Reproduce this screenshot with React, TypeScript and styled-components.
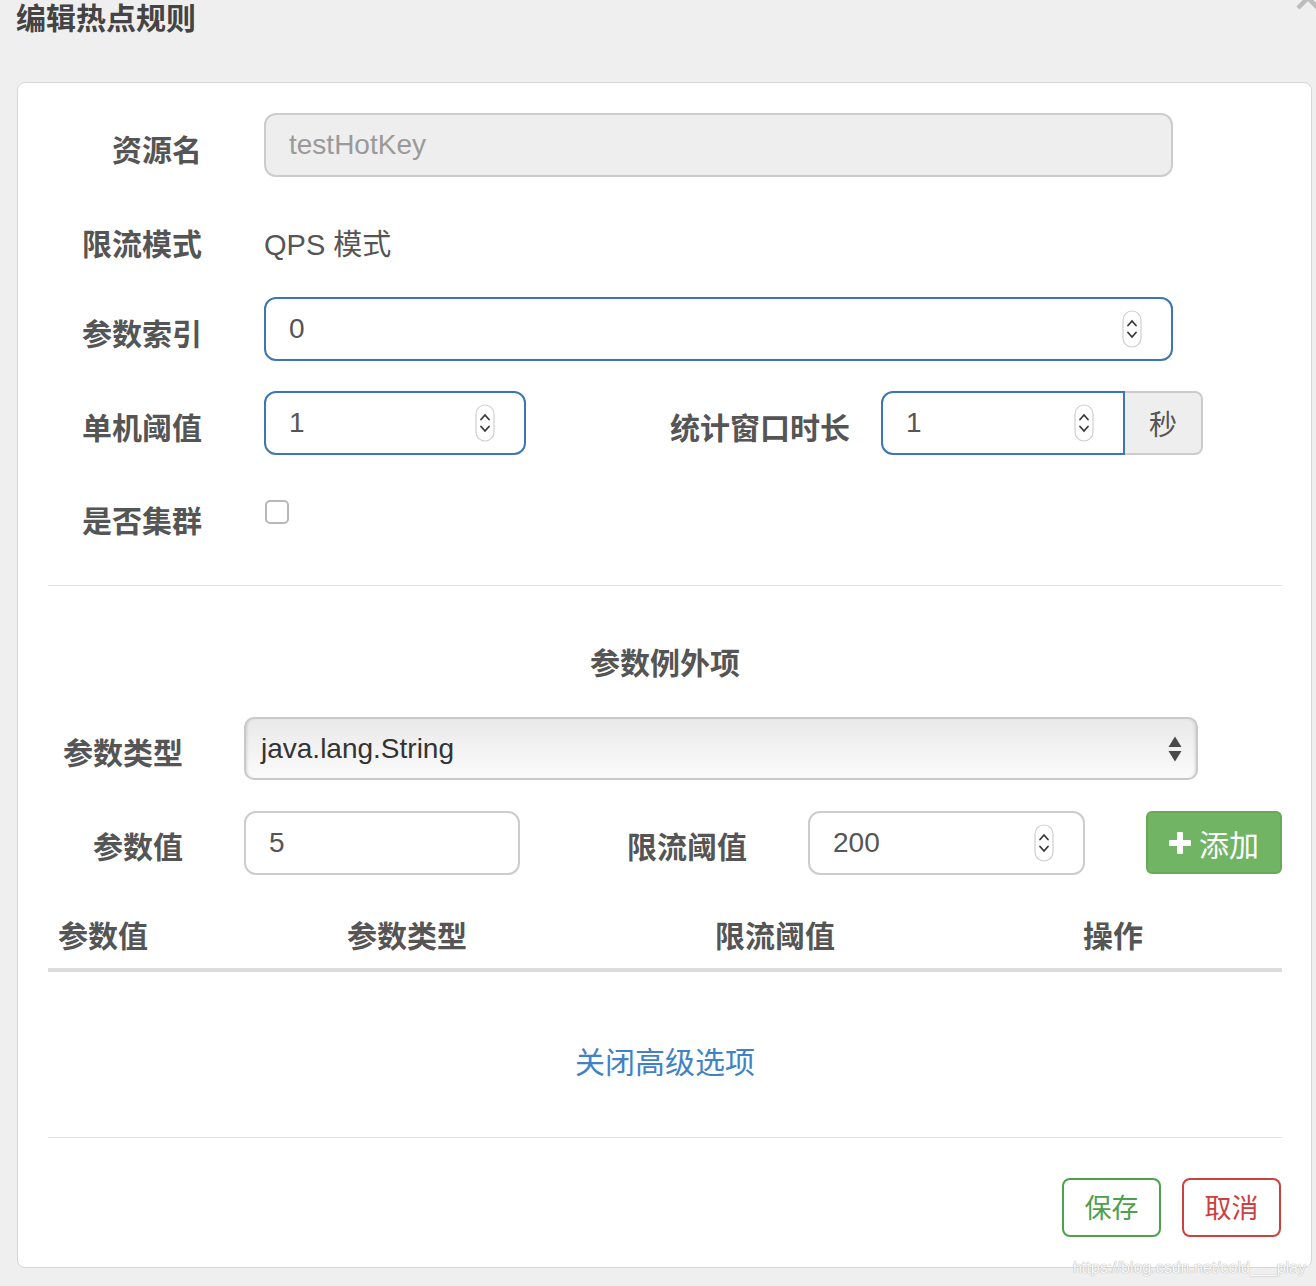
import React from "react";
import styled, { createGlobalStyle } from "styled-components";

const GlobalStyle = createGlobalStyle`
    html, body {
        margin: 0;
        padding: 0;
        background: #efefef;
    }
    body {
        font-family: "Liberation Sans", "Noto Sans CJK SC", sans-serif;
        color: #555;
    }
    * {
        box-sizing: border-box;
    }
`;

const Spinner = () => (
    <svg width="20" height="38" viewBox="0 0 20 38">
        <rect x="1" y="1" width="18" height="36" rx="9" fill="#fff" stroke="#cfcfcf" strokeWidth="1.2" />
        <path d="M6 15.5 L10 11 L14 15.5" stroke="#3a3a3a" strokeWidth="1.8" fill="none" strokeLinecap="round" />
        <path d="M6 22.5 L10 27 L14 22.5" stroke="#3a3a3a" strokeWidth="1.8" fill="none" strokeLinecap="round" />
    </svg>
);

const SelectArrows = () => (
    <svg width="14" height="28" viewBox="0 0 14 28">
        <path d="M0.5 12 L7 1.5 L13.5 12 Z" fill="#4a4a4a" />
        <path d="M0.5 16 L13.5 16 L7 26.5 Z" fill="#4a4a4a" />
    </svg>
);

const PlusIcon = () => (
    <svg width="22" height="22" viewBox="0 0 22 22">
        <path d="M11 2 V20 M2 11 H20" stroke="#fff" strokeWidth="6" strokeLinecap="round" />
    </svg>
);

const App = () => {
    return (
        <>
            <GlobalStyle />
            <Page>
                <Header>
                    <Title>编辑热点规则</Title>
                    <CloseIcon width="28" height="28" viewBox="0 0 28 28">
                        <path d="M4 4 L24 24 M24 4 L4 24" stroke="#bdbdbd" strokeWidth="4.5" />
                    </CloseIcon>
                </Header>
                <Card>
                    <Section>
                        <Row>
                            <Label $top={18}>资源名</Label>
                            <Field $width={909} $variant="disabled">
                                testHotKey
                            </Field>
                        </Row>
                        <Row>
                            <Label $top={18}>限流模式</Label>
                            <StaticText>QPS 模式</StaticText>
                        </Row>
                        <Row>
                            <Label $top={18}>参数索引</Label>
                            <Field $width={909} $variant="focus">
                                0
                                <Spinner />
                            </Field>
                        </Row>
                        <Row>
                            <Label $top={18}>单机阈值</Label>
                            <InlineFields>
                                <Field $width={262} $variant="focus">
                                    1
                                    <Spinner />
                                </Field>
                                <InlineLabel $top={18}>统计窗口时长</InlineLabel>
                                <InputGroup>
                                    <Field $width={244} $variant="focus" $group>
                                        1
                                        <Spinner />
                                    </Field>
                                    <Addon>秒</Addon>
                                </InputGroup>
                            </InlineFields>
                        </Row>
                        <Row>
                            <Label $top={17}>是否集群</Label>
                            <Checkbox />
                        </Row>
                    </Section>
                    <Divider $top={40} />
                    <SectionTitle>参数例外项</SectionTitle>
                    <ExceptionForm>
                        <TypeRow>
                            <Label $top={17}>参数类型</Label>
                            <Select>
                                java.lang.String
                                <SelectArrows />
                            </Select>
                        </TypeRow>
                        <ValueRow>
                            <Label $top={17}>参数值</Label>
                            <Field $width={276}>5</Field>
                            <Label $top={17}>限流阈值</Label>
                            <Field $width={277}>
                                200
                                <Spinner />
                            </Field>
                            <AddButton>
                                <PlusIcon />
                                添加
                            </AddButton>
                        </ValueRow>
                    </ExceptionForm>
                    <TableHead>
                        <HeadCell>参数值</HeadCell>
                        <HeadCell>参数类型</HeadCell>
                        <HeadCell>限流阈值</HeadCell>
                        <HeadCell>操作</HeadCell>
                    </TableHead>
                    <ToggleLink>关闭高级选项</ToggleLink>
                    <Divider $top={54} />
                    <Footer>
                        <OutlineButton $color="#4e9f4e">保存</OutlineButton>
                        <OutlineButton $color="#cc4040">取消</OutlineButton>
                    </Footer>
                </Card>
                <Watermark>https://blog.csdn.net/cold___play</Watermark>
            </Page>
        </>
    );
};

const Page = styled.div`
    position: relative;
    width: 1316px;
    height: 1286px;
    overflow: hidden;
    background: #efefef;
`;

const Header = styled.div`
    display: flex;
    justify-content: space-between;
    align-items: flex-start;
    height: 82px;
    padding-left: 16px;
`;

const Title = styled.h1`
    margin: 0;
    font-size: 30px;
    line-height: 37px;
    font-weight: 700;
    color: #444;
`;

const CloseIcon = styled.svg`
    margin-top: -16px;
    margin-right: -6px;
`;

const Card = styled.div`
    margin-left: 17px;
    width: 1295px;
    height: 1186px;
    background: #fff;
    border: 1px solid #d6d6d6;
    border-radius: 8px;
    padding: 30px 29px 0 30px;
`;

const Section = styled.div`
    display: flex;
    flex-direction: column;
    gap: 30px;
`;

const Row = styled.div`
    display: grid;
    grid-template-columns: 154px 1fr;
    column-gap: 62px;
    min-height: 60px;
`;

const Label = styled.label<{ $top?: number }>`
    display: block;
    text-align: right;
    font-size: 30px;
    font-weight: 700;
    line-height: 40px;
    padding-top: ${({ $top = 16 }) => $top}px;
    color: #555;
    white-space: nowrap;
`;

const StaticText = styled.div`
    font-size: 29px;
    line-height: 40px;
    padding-top: 18px;
    color: #555;
`;

const Field = styled.div<{ $width: number; $variant?: "focus" | "disabled"; $group?: boolean }>`
    display: flex;
    align-items: center;
    justify-content: space-between;
    width: ${({ $width }) => $width}px;
    height: 64px;
    padding: 0 29px 0 23px;
    font-size: 28px;
    color: ${({ $variant }) => ($variant === "disabled" ? "#9a9a9a" : "#555")};
    background: ${({ $variant }) => ($variant === "disabled" ? "#eee" : "#fff")};
    border: 2px solid
        ${({ $variant }) => ($variant === "focus" ? "#3d77b3" : "#cccccc")};
    border-radius: ${({ $group }) => ($group ? "12px 0 0 12px" : "12px")};
`;

const InlineFields = styled.div`
    display: flex;
    align-items: flex-start;
    width: 939px;
`;

const InlineLabel = styled(Label)`
    flex: 1;
    margin-right: 31px;
`;

const InputGroup = styled.div`
    display: flex;
    width: 322px;
`;

const Addon = styled.div`
    width: 78px;
    height: 64px;
    display: flex;
    align-items: center;
    justify-content: center;
    font-size: 28px;
    color: #555;
    background: #eee;
    border: 2px solid #ccc;
    border-left: none;
    border-radius: 0 8px 8px 0;
`;

const Checkbox = styled.div`
    width: 24px;
    height: 24px;
    margin-top: 15px;
    margin-left: 1px;
    border: 2px solid #b8b8b8;
    border-radius: 5px;
    background: #fff;
`;

const Divider = styled.div<{ $top: number }>`
    margin-top: ${({ $top }) => $top}px;
    height: 1px;
    background: #e3e3e3;
`;

const SectionTitle = styled.h2`
    margin: 58px 0 0;
    text-align: center;
    font-size: 30px;
    line-height: 40px;
    font-weight: 700;
    color: #555;
`;

const ExceptionForm = styled.div`
    display: flex;
    flex-direction: column;
    gap: 31px;
    margin-top: 33px;
`;

const TypeRow = styled.div`
    display: grid;
    grid-template-columns: 135px 954px;
    column-gap: 61px;
`;

const ValueRow = styled.div`
    display: grid;
    grid-template-columns: 135px 276px 1fr 277px 136px;
    column-gap: 61px;
`;

const Select = styled.div`
    display: flex;
    align-items: center;
    justify-content: space-between;
    height: 63px;
    padding: 0 14px 0 15px;
    font-size: 28px;
    color: #333;
    background: linear-gradient(#e9e9e9, #fbfbfb);
    border: 2px solid #c9c9c9;
    border-radius: 10px;
    box-shadow: inset 3px 0 3px -2px rgba(0, 0, 0, 0.12),
        inset -3px 0 3px -2px rgba(0, 0, 0, 0.12);
`;

const AddButton = styled.button`
    display: flex;
    align-items: center;
    justify-content: center;
    gap: 8px;
    height: 63px;
    padding: 0;
    font-family: inherit;
    font-size: 30px;
    color: #fff;
    background: #71b464;
    border: 2px solid #66aa58;
    border-radius: 6px;
`;

const TableHead = styled.div`
    display: grid;
    grid-template-columns: 289px 368px 368px 1fr;
    height: 64px;
    margin-top: 33px;
    border-bottom: 4px solid #ddd;
`;

const HeadCell = styled.div`
    padding-left: 10px;
    font-size: 30px;
    font-weight: 700;
    line-height: 58px;
    color: #555;
`;

const ToggleLink = styled.a`
    display: block;
    margin-top: 71px;
    text-align: center;
    font-size: 30px;
    line-height: 40px;
    color: #3f82c6;
`;

const Footer = styled.div`
    display: flex;
    justify-content: flex-end;
    gap: 21px;
    margin-top: 40px;
    padding-right: 1px;
`;

const OutlineButton = styled.button<{ $color: string }>`
    width: 99px;
    height: 59px;
    padding: 0 0 3px;
    font-family: inherit;
    font-size: 27px;
    color: ${({ $color }) => $color};
    background: #fff;
    border: 2px solid ${({ $color }) => $color};
    border-radius: 8px;
`;

const Watermark = styled.div`
    position: absolute;
    right: 10px;
    top: 1259px;
    font-size: 16px;
    color: #fafafa;
    text-shadow: 0 0 1px #aaa, 0 0 1px #bbb;
    white-space: nowrap;
`;

export default App;
